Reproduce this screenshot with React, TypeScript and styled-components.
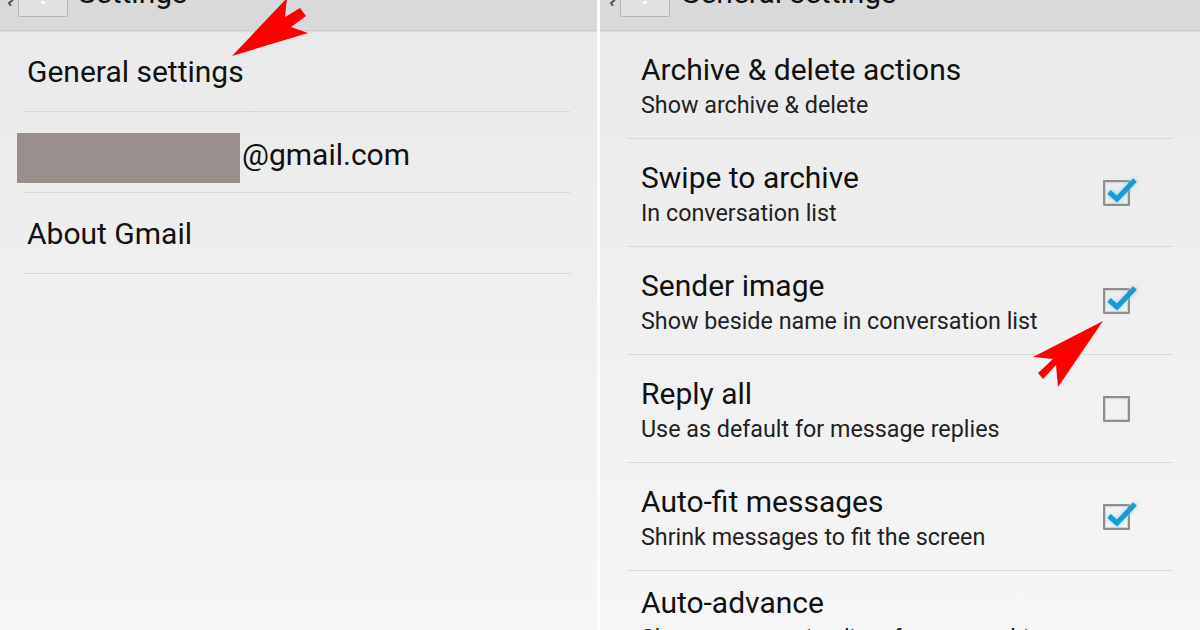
import React from "react";
import styled, { createGlobalStyle } from "styled-components";

const Global = createGlobalStyle`
  html, body { margin: 0; padding: 0; background: #fff; }
  body { font-family: Roboto, "Noto Sans", Arial, sans-serif; }
`;

const Screen = styled.div`
  position: relative;
  width: 1200px;
  height: 630px;
  display: flex;
  gap: 3px;
  background: #fdfdfd;
  overflow: hidden;
`;

const Panel = styled.section<{ $w: number }>`
  width: ${(p) => p.$w}px;
  flex: none;
  display: flex;
  flex-direction: column;
  background: linear-gradient(to bottom, #e9e9e9 0%, #efefef 45%, #f6f6f6 100%);
  overflow: hidden;
`;

const ActionBar = styled.header<{ $pad: number }>`
  height: 30px;
  flex: none;
  display: flex;
  align-items: flex-start;
  padding-left: ${(p) => p.$pad}px;
  background: #d9d9d9;
  border-bottom: 1px solid #cbcbcb;
  box-shadow: 0 1px 1px rgba(0, 0, 0, 0.06);
  overflow: hidden;
`;

const UpCaret = styled.svg`
  width: 8px;
  height: 6px;
  flex: none;
  margin-right: 4px;
`;

const BackBox = styled.div`
  width: 48px;
  height: 44px;
  margin-top: -29px;
  flex: none;
  display: flex;
  justify-content: center;
  align-items: flex-end;
  background: linear-gradient(#e6e6e6, #e0e0e0);
  border: 1px solid #b5b5b5;
  border-radius: 2px;
`;

const BoxMark = styled.span`
  width: 4px;
  height: 3px;
  margin-bottom: 12px;
  background: #fafafa;
  border-radius: 1px;
`;

const BarTitle = styled.h1`
  margin: -22px 0 0 10px;
  font-size: 30px;
  line-height: 30px;
  font-weight: 400;
  color: #111;
  white-space: nowrap;
`;

const List = styled.ul<{ $left: number; $right: number }>`
  list-style: none;
  margin: 0 ${(p) => p.$right}px 0 ${(p) => p.$left}px;
  padding: 0;
`;

const SimpleRow = styled.li`
  box-sizing: border-box;
  height: 81px;
  padding: 1px 0 0 3px;
  display: flex;
  align-items: center;
  border-bottom: 1px solid #d9d9d9;
  font-size: 30px;
  color: #111;
  white-space: nowrap;
`;

const Redaction = styled.span`
  width: 223px;
  height: 50px;
  margin: 11px 2px 0 -10px;
  flex: none;
  background: #9a8f8d;
`;

const EmailText = styled.span`
  padding-top: 3px;
`;

const PrefRow = styled.li<{ $top: number }>`
  height: 108px;
  box-sizing: border-box;
  padding: ${(p) => p.$top}px 43px 0 14px;
  display: flex;
  align-items: flex-start;
  justify-content: space-between;
  border-bottom: 1px solid #dadada;
`;

const PrefText = styled.div`
  display: flex;
  flex-direction: column;
  max-width: 490px;
`;

const PrefTitle = styled.span`
  font-size: 30px;
  line-height: 35px;
  color: #111;
  white-space: nowrap;
`;

const PrefSummary = styled.span`
  font-size: 23.3px;
  line-height: 36px;
  color: #222;
`;

const Check = styled.span`
  position: relative;
  align-self: center;
  margin-top: -21px;
  width: 23px;
  height: 22px;
  flex: none;
  border: 2px solid #8e8e8e;
  border-radius: 1px;
  box-shadow: inset 0 0 0 1px #d2d2d2;
`;

const Tick = styled.svg`
  position: absolute;
  left: 0;
  top: -8px;
  width: 36px;
  height: 30px;
  overflow: visible;
  filter: drop-shadow(0 0 2px rgba(120, 210, 245, 0.9));
`;

const Overlay = styled.svg`
  position: absolute;
  left: 0;
  top: 0;
  width: 1200px;
  height: 630px;
  pointer-events: none;
`;

const CheckBox = ({ checked }: { checked: boolean }) => (
  <Check>
    {checked && (
      <Tick viewBox="0 0 36 30">
        <polyline
          points="4,18 12,25 30,6"
          fill="none"
          stroke="#1b9ad1"
          strokeWidth="5"
          strokeLinecap="butt"
          strokeLinejoin="miter"
        />
      </Tick>
    )}
  </Check>
);

const prefs = [
  { title: "Archive & delete actions", summary: "Show archive & delete", box: null, top: 21 },
  { title: "Swipe to archive", summary: "In conversation list", box: true, top: 21 },
  { title: "Sender image", summary: "Show beside name in conversation list", box: true, top: 21 },
  { title: "Reply all", summary: "Use as default for message replies", box: false, top: 21 },
  { title: "Auto-fit messages", summary: "Shrink messages to fit the screen", box: true, top: 21 },
  {
    title: "Auto-advance",
    summary: "Show conversation list after you archive or delete",
    box: null,
    top: 14,
  },
];

const Caret = () => (
  <UpCaret viewBox="0 0 8 6">
    <polyline points="7,0 3,3 5,6" fill="none" stroke="#555" strokeWidth="2" />
  </UpCaret>
);

export default function App() {
  return (
    <>
      <Global />
      <Screen>
        <Panel $w={597}>
          <ActionBar $pad={6}>
            <Caret />
            <BackBox>
              <BoxMark />
            </BackBox>
            <BarTitle>Settings</BarTitle>
          </ActionBar>
          <List $left={24} $right={27}>
            <SimpleRow>General settings</SimpleRow>
            <SimpleRow>
              <Redaction />
              <EmailText>@gmail.com</EmailText>
            </SimpleRow>
            <SimpleRow>About Gmail</SimpleRow>
          </List>
        </Panel>
        <Panel $w={600}>
          <ActionBar $pad={8}>
            <Caret />
            <BackBox>
              <BoxMark />
            </BackBox>
            <BarTitle>General settings</BarTitle>
          </ActionBar>
          <List $left={27} $right={27}>
            {prefs.map((p) => (
              <PrefRow key={p.title} $top={p.top}>
                <PrefText>
                  <PrefTitle>{p.title}</PrefTitle>
                  <PrefSummary>{p.summary}</PrefSummary>
                </PrefText>
                {p.box !== null && <CheckBox checked={p.box} />}
              </PrefRow>
            ))}
          </List>
        </Panel>
        <Overlay viewBox="0 0 1200 630">
          <polygon
            points="232,56 287,-2 285,17 300,8 306,16 291,27 308,33"
            fill="#ff0000"
          />
          <polygon
            points="1103,321 1033,357 1053,359 1038,373 1043,379 1056,365 1058,387"
            fill="#ff0000"
          />
        </Overlay>
      </Screen>
    </>
  );
}
